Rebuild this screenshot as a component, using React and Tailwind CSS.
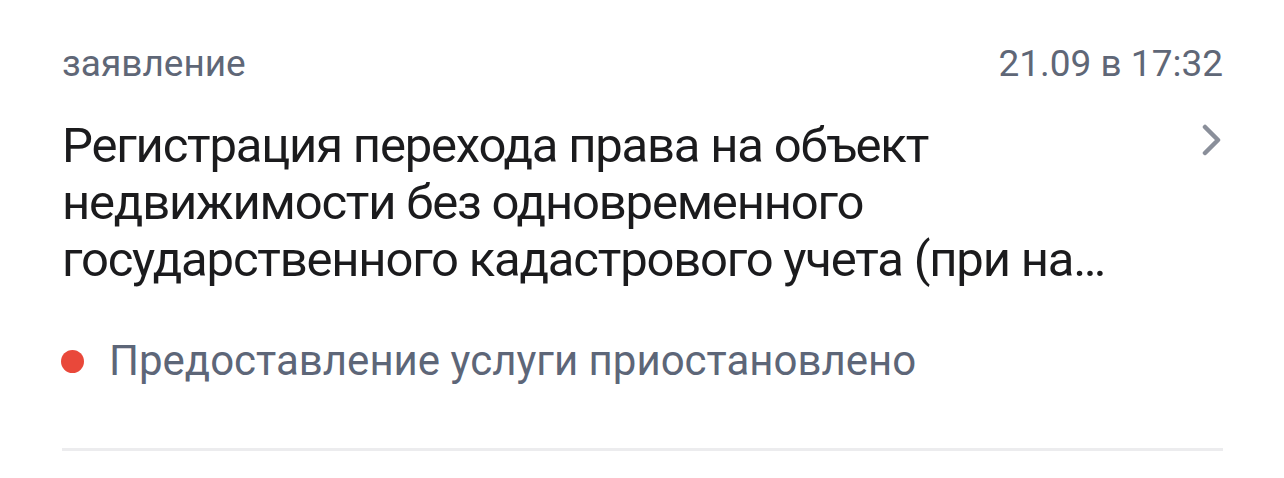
export default function App() {
  return (
    <div className="w-[1284px] h-[478px] bg-white" style={{ fontFamily: "Roboto, 'Noto Sans', sans-serif" }}>
      <div className="pl-[62px] pr-[61px] pt-[43px]">
        <div className="flex items-start justify-between">
          <span className="text-[37px] leading-[42px] text-[#5f6777]">заявление</span>
          <span className="text-[37px] leading-[42px] text-[#5f6777]">21.09 в 17:32</span>
        </div>
        <div className="mt-[32px] flex items-start justify-between">
          <div className="w-[1060px] text-[49px] leading-[57px] tracking-[-1.2px] text-[#1b1b1d]">
            <div>Регистрация перехода права на объект</div>
            <div>недвижимости без одновременного</div>
            <div className="truncate">государственного кадастрового учета (при наличии прав на объект недвижимости)</div>
          </div>
          <svg className="mt-[7px] mr-[1px]" width="20" height="32" viewBox="0 0 20 32" fill="none">
            <path d="M3 3 L16 16 L3 29" stroke="#8a8f9a" strokeWidth="4.5" strokeLinecap="round" strokeLinejoin="round" />
          </svg>
        </div>
        <div className="mt-[48px] flex items-center">
          <span className="w-[23px] h-[23px] rounded-full bg-[#e9483a] ml-[-1px] mr-[25px]"></span>
          <span className="text-[42px] leading-[50px] text-[#5d6678]">Предоставление услуги приостановлено</span>
        </div>
        <div className="mt-[62px] h-[3px] bg-[#ececee]"></div>
      </div>
    </div>
  );
}
